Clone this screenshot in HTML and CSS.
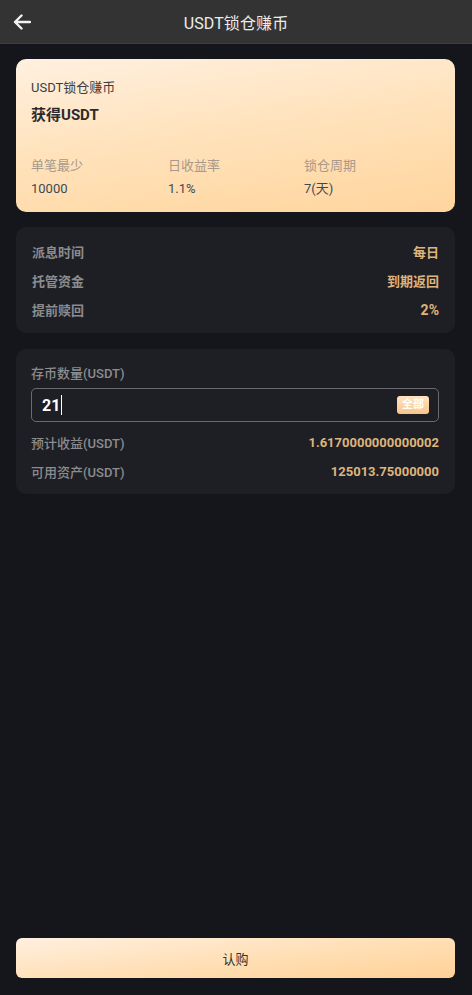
FILE: index.html
```html
<!DOCTYPE html>
<html lang="zh">
<head>
<meta charset="utf-8">
<title>USDT锁仓赚币</title>
<link rel="stylesheet" href="styles.css">
</head>
<body>
<div class="page">
  <header class="topbar">
    <span class="back">
      <svg width="18" height="16" viewBox="0 0 18 16"><path d="M17 8H2M8.5 1.5L2 8l6.5 6.5" fill="none" stroke="#f2f2f2" stroke-width="2.4" stroke-linecap="round" stroke-linejoin="round"/></svg>
    </span>
    <h1 class="title">USDT锁仓赚币</h1>
  </header>

  <main class="content">
    <section class="hero">
      <div class="hero-sub">USDT锁仓赚币</div>
      <div class="hero-title">获得USDT</div>
      <div class="hero-grid">
        <div class="cell"><div class="cell-label">单笔最少</div><div class="cell-value">10000</div></div>
        <div class="cell"><div class="cell-label">日收益率</div><div class="cell-value">1.1%</div></div>
        <div class="cell"><div class="cell-label">锁仓周期</div><div class="cell-value">7(天)</div></div>
      </div>
    </section>

    <section class="panel info">
      <div class="row"><span class="label">派息时间</span><span class="value">每日</span></div>
      <div class="row"><span class="label">托管资金</span><span class="value">到期返回</span></div>
      <div class="row"><span class="label">提前赎回</span><span class="value">2%</span></div>
    </section>

    <section class="panel form">
      <div class="form-label">存币数量(USDT)</div>
      <div class="input">
        <span class="input-val">21</span><span class="caret"></span>
        <span class="all">全部</span>
      </div>
      <div class="row light"><span class="label">预计收益(USDT)</span><span class="value">1.6170000000000002</span></div>
      <div class="row light"><span class="label">可用资产(USDT)</span><span class="value">125013.75000000</span></div>
    </section>
  </main>

  <footer class="footer">
    <button class="buy">认购</button>
  </footer>
</div>
</body>
</html>
```

FILE: styles.css
```css
* { box-sizing: border-box; }
html, body { margin: 0; padding: 0; }
body {
  background: #15161b;
  font-family: Roboto, "Noto Sans CJK SC", sans-serif;
  color: #eee;
}
.page {
  min-height: 100vh;
  display: flex;
  flex-direction: column;
}
.topbar {
  height: 44px;
  background: #333333;
  border-bottom: 1px solid #3e3e3e;
  display: flex;
  align-items: center;
  justify-content: center;
  position: relative;
}
.back {
  position: absolute;
  left: 13px;
  top: 14px;
  display: flex;
}
.title {
  margin: 0;
  font-size: 16px;
  font-weight: 400;
  color: #ececec;
  letter-spacing: 0.1px;
}
.content {
  padding: 15px 17px 0 16px;
  display: flex;
  flex-direction: column;
  gap: 15px;
}
.hero {
  height: 153px;
  border-radius: 10px;
  background: linear-gradient(172deg, #fff0e0 0%, #ffe3bd 45%, #ffd59d 100%);
  padding: 20px 15px 0;
}
.hero-sub {
  font-size: 13px;
  line-height: 18px;
  color: #3a3d44;
}
.hero-title {
  margin-top: 8px;
  font-size: 15px;
  line-height: 20px;
  font-weight: 700;
  color: #2b2b2e;
}
.hero-grid {
  margin-top: 32px;
  display: grid;
  grid-template-columns: 137px 136px 1fr;
}
.cell-label {
  font-size: 13px;
  line-height: 18px;
  color: #a8998a;
}
.cell-value {
  margin-top: 5px;
  font-size: 13px;
  line-height: 18px;
  color: #3a4a56;
}
.panel {
  background: #1e1f24;
  border-radius: 10px;
  padding: 10px 16px 9px 16px;
}
.info { height: 106px; }
.row {
  height: 29px;
  display: flex;
  align-items: center;
  justify-content: space-between;
}
.label {
  font-size: 13px;
  font-weight: 700;
  color: #8c8c8f;
}
.value {
  font-size: 13px;
  font-weight: 700;
  color: #dfb47c;
}
.info .row:last-child .value { font-size: 14px; }
.row.light .label { font-weight: 500; }
.form {
  padding: 15px 16px 8px 15px;
  margin-top: 1px;
}
.form-label {
  font-size: 13px;
  line-height: 20px;
  font-weight: 500;
  color: #8c8c8f;
}
.input {
  margin-top: 4px;
  height: 34px;
  border: 1px solid #6a6a6e;
  border-radius: 5px;
  display: flex;
  align-items: center;
  padding: 0 9px 0 10px;
}
.input-val {
  font-size: 16px;
  font-weight: 700;
  color: #ffffff;
}
.caret {
  width: 1px;
  height: 20px;
  background: #ffffff;
  margin-left: 1px;
}
.all {
  margin-left: auto;
  height: 18px;
  padding: 0 5px;
  border-radius: 3px;
  background: linear-gradient(180deg, #ffe3c2 0%, #f9c488 100%);
  color: #ffffff;
  font-size: 11px;
  font-weight: 700;
  line-height: 18px;
}
.input + .row { margin-top: 6px; }
.footer {
  margin-top: auto;
  padding: 0 17px 17px 16px;
}
.buy {
  width: 100%;
  height: 40px;
  border: 0;
  border-radius: 6px;
  background: linear-gradient(174deg, #fff0e0 0%, #ffe0b8 50%, #ffd196 100%);
  font-family: Roboto, "Noto Sans CJK SC", sans-serif;
  font-size: 13px;
  color: #333;
}
```
